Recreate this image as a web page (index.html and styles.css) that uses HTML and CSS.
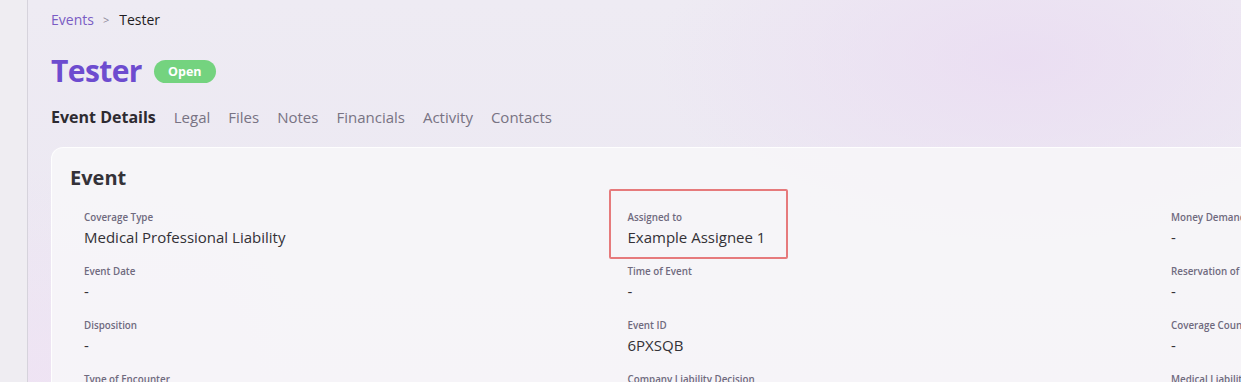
FILE: index.html
```html
<!DOCTYPE html>
<html lang="en">
<head>
<meta charset="utf-8">
<title>Tester</title>
<link rel="stylesheet" href="styles.css">
</head>
<body>
<div class="app">
  <aside class="sidebar"></aside>
  <main class="main">
    <nav class="crumbs">
      <a class="crumb-link">Events</a>
      <span class="crumb-sep">&gt;</span>
      <span class="crumb-current">Tester</span>
    </nav>
    <div class="title-row">
      <h1 class="title">Tester</h1>
      <span class="badge">Open</span>
    </div>
    <div class="tabs">
      <span class="tab active">Event Details</span>
      <span class="tab">Legal</span>
      <span class="tab">Files</span>
      <span class="tab">Notes</span>
      <span class="tab">Financials</span>
      <span class="tab">Activity</span>
      <span class="tab">Contacts</span>
    </div>
    <section class="card">
      <h2 class="card-title">Event</h2>
      <div class="grid">
        <div class="field"><div class="label">Coverage Type</div><div class="value">Medical Professional Liability</div></div>
        <div class="field highlight"><div class="label">Assigned to</div><div class="value">Example Assignee 1</div></div>
        <div class="field"><div class="label">Money Demanded</div><div class="value">-</div></div>
        <div class="field"><div class="label">Event Date</div><div class="value">-</div></div>
        <div class="field"><div class="label">Time of Event</div><div class="value">-</div></div>
        <div class="field"><div class="label">Reservation of Rights</div><div class="value">-</div></div>
        <div class="field"><div class="label">Disposition</div><div class="value">-</div></div>
        <div class="field"><div class="label">Event ID</div><div class="value">6PXSQB</div></div>
        <div class="field"><div class="label">Coverage Counsel</div><div class="value">-</div></div>
        <div class="field"><div class="label">Type of Encounter</div><div class="value">-</div></div>
        <div class="field"><div class="label">Company Liability Decision</div><div class="value">-</div></div>
        <div class="field"><div class="label">Medical Liability</div><div class="value">-</div></div>
      </div>
    </section>
  </main>
</div>
</body>
</html>
```
FILE: styles.css
```css
*, *::before, *::after { box-sizing: border-box; }
html, body {
  margin: 0;
  padding: 0;
  width: 1241px;
  height: 382px;
  overflow: hidden;
}
body {
  font-family: "Open Sans", "Liberation Sans", sans-serif;
  color: #333136;
  background: #ebe8f1;
}
.app {
  display: flex;
  height: 382px;
  background:
    radial-gradient(ellipse 520px 260px at 1020px 60px, rgba(234, 220, 242, 0.85), rgba(234, 220, 242, 0) 70%),
    radial-gradient(ellipse 400px 300px at 40px 380px, rgba(240, 226, 244, 0.7), rgba(240, 226, 244, 0) 70%),
    linear-gradient(180deg, #eeebf3 0%, #ebe7f2 100%);
}
.sidebar {
  width: 28px;
  flex: none;
  background: #efedf2;
  border-right: 1px solid #d6d3dc;
}
.main {
  flex: 1;
  min-width: 0;
  padding: 10px 0 0 23px;
  display: flex;
  flex-direction: column;
}
.crumbs {
  display: flex;
  align-items: center;
  font-size: 14px;
  line-height: 20px;
  height: 20px;
}
.crumb-link { color: #7a5cc4; }
.crumb-sep {
  color: #8d8898;
  font-size: 11px;
  margin: 0 10px 0 9px;
}
.crumb-current { color: #1f1d22; }
.title-row {
  display: flex;
  align-items: center;
  gap: 12px;
  margin-top: 21px;
  height: 40px;
}
.title {
  margin: 0;
  font-size: 30px;
  line-height: 40px;
  font-weight: 700;
  color: #6d4ccf;
  letter-spacing: -0.6px;
}
.badge {
  display: inline-flex;
  align-items: center;
  justify-content: center;
  height: 23px;
  width: 62px;
  border-radius: 12px;
  background: #74d37f;
  color: #ffffff;
  font-size: 12.5px;
  font-weight: 700;
  margin-top: 1px;
}
.tabs {
  display: flex;
  align-items: center;
  gap: 18px;
  margin-top: 14px;
  height: 24px;
}
.tab {
  font-size: 15px;
  line-height: 24px;
  color: #787383;
}
.tab.active {
  font-size: 16px;
  font-weight: 700;
  color: #2d2b31;
}
.card {
  margin-top: 18px;
  width: 1720px;
  padding: 16px 18px 40px;
  background: rgba(246, 245, 249, 0.92);
  border: 1px solid rgba(255, 255, 255, 0.85);
  border-radius: 12px;
}
.card-title {
  margin: 0;
  font-size: 20px;
  line-height: 28px;
  font-weight: 700;
  color: #343238;
}
.grid {
  margin-top: 18px;
  display: grid;
  grid-template-columns: repeat(3, 543.5px);
  row-gap: 16px;
}
.field {
  position: relative;
  padding-left: 14px;
}
.label {
  font-size: 9.8px;
  line-height: 14px;
  font-weight: 600;
  color: #6f6a7e;
  padding-top: 1px;
}
.value {
  margin-top: 1px;
  font-size: 15px;
  line-height: 22px;
  color: #333136;
}
.highlight::before {
  content: "";
  position: absolute;
  top: -21px;
  left: -5px;
  width: 179px;
  height: 70px;
  border: 2px solid #e67a7c;
  border-radius: 2px;
}
```
